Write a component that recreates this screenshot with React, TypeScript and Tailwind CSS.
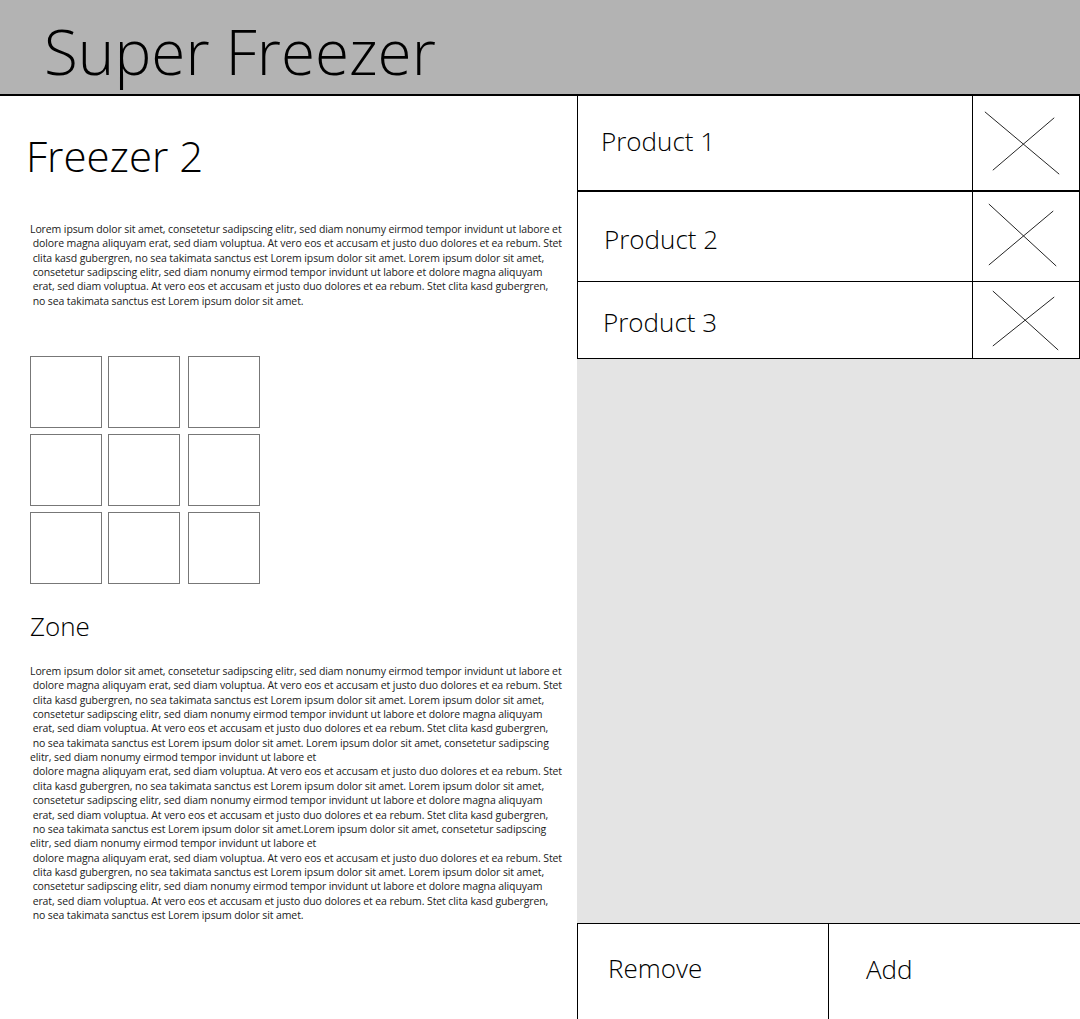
import React from 'react';

const intro = [
  'Lorem ipsum dolor sit amet, consetetur sadipscing elitr, sed diam nonumy eirmod tempor invidunt ut labore et',
  ' dolore magna aliquyam erat, sed diam voluptua. At vero eos et accusam et justo duo dolores et ea rebum. Stet',
  ' clita kasd gubergren, no sea takimata sanctus est Lorem ipsum dolor sit amet. Lorem ipsum dolor sit amet,',
  ' consetetur sadipscing elitr, sed diam nonumy eirmod tempor invidunt ut labore et dolore magna aliquyam',
  ' erat, sed diam voluptua. At vero eos et accusam et justo duo dolores et ea rebum. Stet clita kasd gubergren,',
  ' no sea takimata sanctus est Lorem ipsum dolor sit amet.',
];

const zone = [
  'Lorem ipsum dolor sit amet, consetetur sadipscing elitr, sed diam nonumy eirmod tempor invidunt ut labore et',
  ' dolore magna aliquyam erat, sed diam voluptua. At vero eos et accusam et justo duo dolores et ea rebum. Stet',
  ' clita kasd gubergren, no sea takimata sanctus est Lorem ipsum dolor sit amet. Lorem ipsum dolor sit amet,',
  ' consetetur sadipscing elitr, sed diam nonumy eirmod tempor invidunt ut labore et dolore magna aliquyam',
  ' erat, sed diam voluptua. At vero eos et accusam et justo duo dolores et ea rebum. Stet clita kasd gubergren,',
  ' no sea takimata sanctus est Lorem ipsum dolor sit amet. Lorem ipsum dolor sit amet, consetetur sadipscing',
  'elitr, sed diam nonumy eirmod tempor invidunt ut labore et',
  ' dolore magna aliquyam erat, sed diam voluptua. At vero eos et accusam et justo duo dolores et ea rebum. Stet',
  ' clita kasd gubergren, no sea takimata sanctus est Lorem ipsum dolor sit amet. Lorem ipsum dolor sit amet,',
  ' consetetur sadipscing elitr, sed diam nonumy eirmod tempor invidunt ut labore et dolore magna aliquyam',
  ' erat, sed diam voluptua. At vero eos et accusam et justo duo dolores et ea rebum. Stet clita kasd gubergren,',
  ' no sea takimata sanctus est Lorem ipsum dolor sit amet.Lorem ipsum dolor sit amet, consetetur sadipscing',
  'elitr, sed diam nonumy eirmod tempor invidunt ut labore et',
  ' dolore magna aliquyam erat, sed diam voluptua. At vero eos et accusam et justo duo dolores et ea rebum. Stet',
  ' clita kasd gubergren, no sea takimata sanctus est Lorem ipsum dolor sit amet. Lorem ipsum dolor sit amet,',
  ' consetetur sadipscing elitr, sed diam nonumy eirmod tempor invidunt ut labore et dolore magna aliquyam',
  ' erat, sed diam voluptua. At vero eos et accusam et justo duo dolores et ea rebum. Stet clita kasd gubergren,',
  ' no sea takimata sanctus est Lorem ipsum dolor sit amet.',
];

// X lines per row, relative to the 107px wide cell
const products = [
  { name: 'Product 1', h: 'h-[96px]', pad: 'pl-[23px] pb-[4px]', border: 'border-b-2', vb: '0 0 107 95', a: [12, 16, 87, 79], b: [82, 22, 20, 75] },
  { name: 'Product 2', h: 'h-[90px]', pad: 'pl-[26px] pt-[6px]', border: 'border-b', vb: '0 0 107 89', a: [16, 12, 84, 74], b: [81, 19, 16, 73] },
  { name: 'Product 3', h: 'h-[77px]', pad: 'pl-[25px] pt-[4px]', border: 'border-b', vb: '0 0 107 76', a: [20, 9, 86, 68], b: [82, 15, 20, 64] },
];

function Paragraph({ lines }: { lines: string[] }) {
  return (
    <div className="text-[10.5px] tracking-[-0.1px] leading-[14.35px] text-[#1a1a1a] whitespace-pre">
      {lines.map((l, i) => (
        <div key={i}>{l}</div>
      ))}
    </div>
  );
}

export default function App() {
  return (
    <div className="w-[1080px] h-[1019px] bg-white flex flex-col overflow-hidden font-['Open_Sans','Noto_Sans',sans-serif] text-black">
      {/* Header */}
      <header className="h-[96px] shrink-0 bg-[#b3b3b3] border-b-2 border-black pl-[44px]">
        <h1 className="text-[62px] font-light leading-[86px] pt-[8px]">Super Freezer</h1>
      </header>

      <div className="flex flex-1 min-h-0">
        {/* Left content */}
        <main className="w-[577px] shrink-0 pl-[30px]">
          <h2 className="text-[42px] font-light leading-[48px] mt-[36px] -ml-[4px]">Freezer 2</h2>
          <div className="mt-[42px]">
            <Paragraph lines={intro} />
          </div>

          <div className="mt-[48px] grid grid-cols-[72px_72px_74px] gap-x-[6px] gap-y-[6px] w-max">
            {Array.from({ length: 9 }).map((_, i) => (
              <div key={i} className={`h-[72px] border border-[#777] ${i % 3 === 2 ? 'ml-[2px]' : ''}`} />
            ))}
          </div>

          <h3 className="text-[26px] font-light leading-[32px] mt-[26px]">Zone</h3>
          <div className="mt-[22px]">
            <Paragraph lines={zone} />
          </div>
        </main>

        {/* Right panel */}
        <aside className="flex-1 flex flex-col bg-[#e4e4e4]">
          <div className="bg-white border-l border-r border-black">
            {products.map((p) => (
              <div key={p.name} className={`flex ${p.h} ${p.border} border-black`}>
                <div className={`flex-1 flex items-center text-[26px] font-light ${p.pad}`}>{p.name}</div>
                <div className="w-[107px] border-l border-black">
                  <svg className="w-full h-full" viewBox={p.vb} preserveAspectRatio="none">
                    <line x1={p.a[0]} y1={p.a[1]} x2={p.a[2]} y2={p.a[3]} stroke="#222" strokeWidth="1" />
                    <line x1={p.b[0]} y1={p.b[1]} x2={p.b[2]} y2={p.b[3]} stroke="#222" strokeWidth="1" />
                  </svg>
                </div>
              </div>
            ))}
          </div>

          <div className="flex-1" />

          <div className="h-[96px] shrink-0 flex bg-white border-t border-l border-black">
            <button className="w-[251px] border-r border-black text-left pl-[30px] pb-[6px] text-[26px] font-light">
              Remove
            </button>
            <button className="flex-1 text-left pl-[37px] pb-[4px] text-[26px] font-light">Add</button>
          </div>
        </aside>
      </div>
    </div>
  );
}
